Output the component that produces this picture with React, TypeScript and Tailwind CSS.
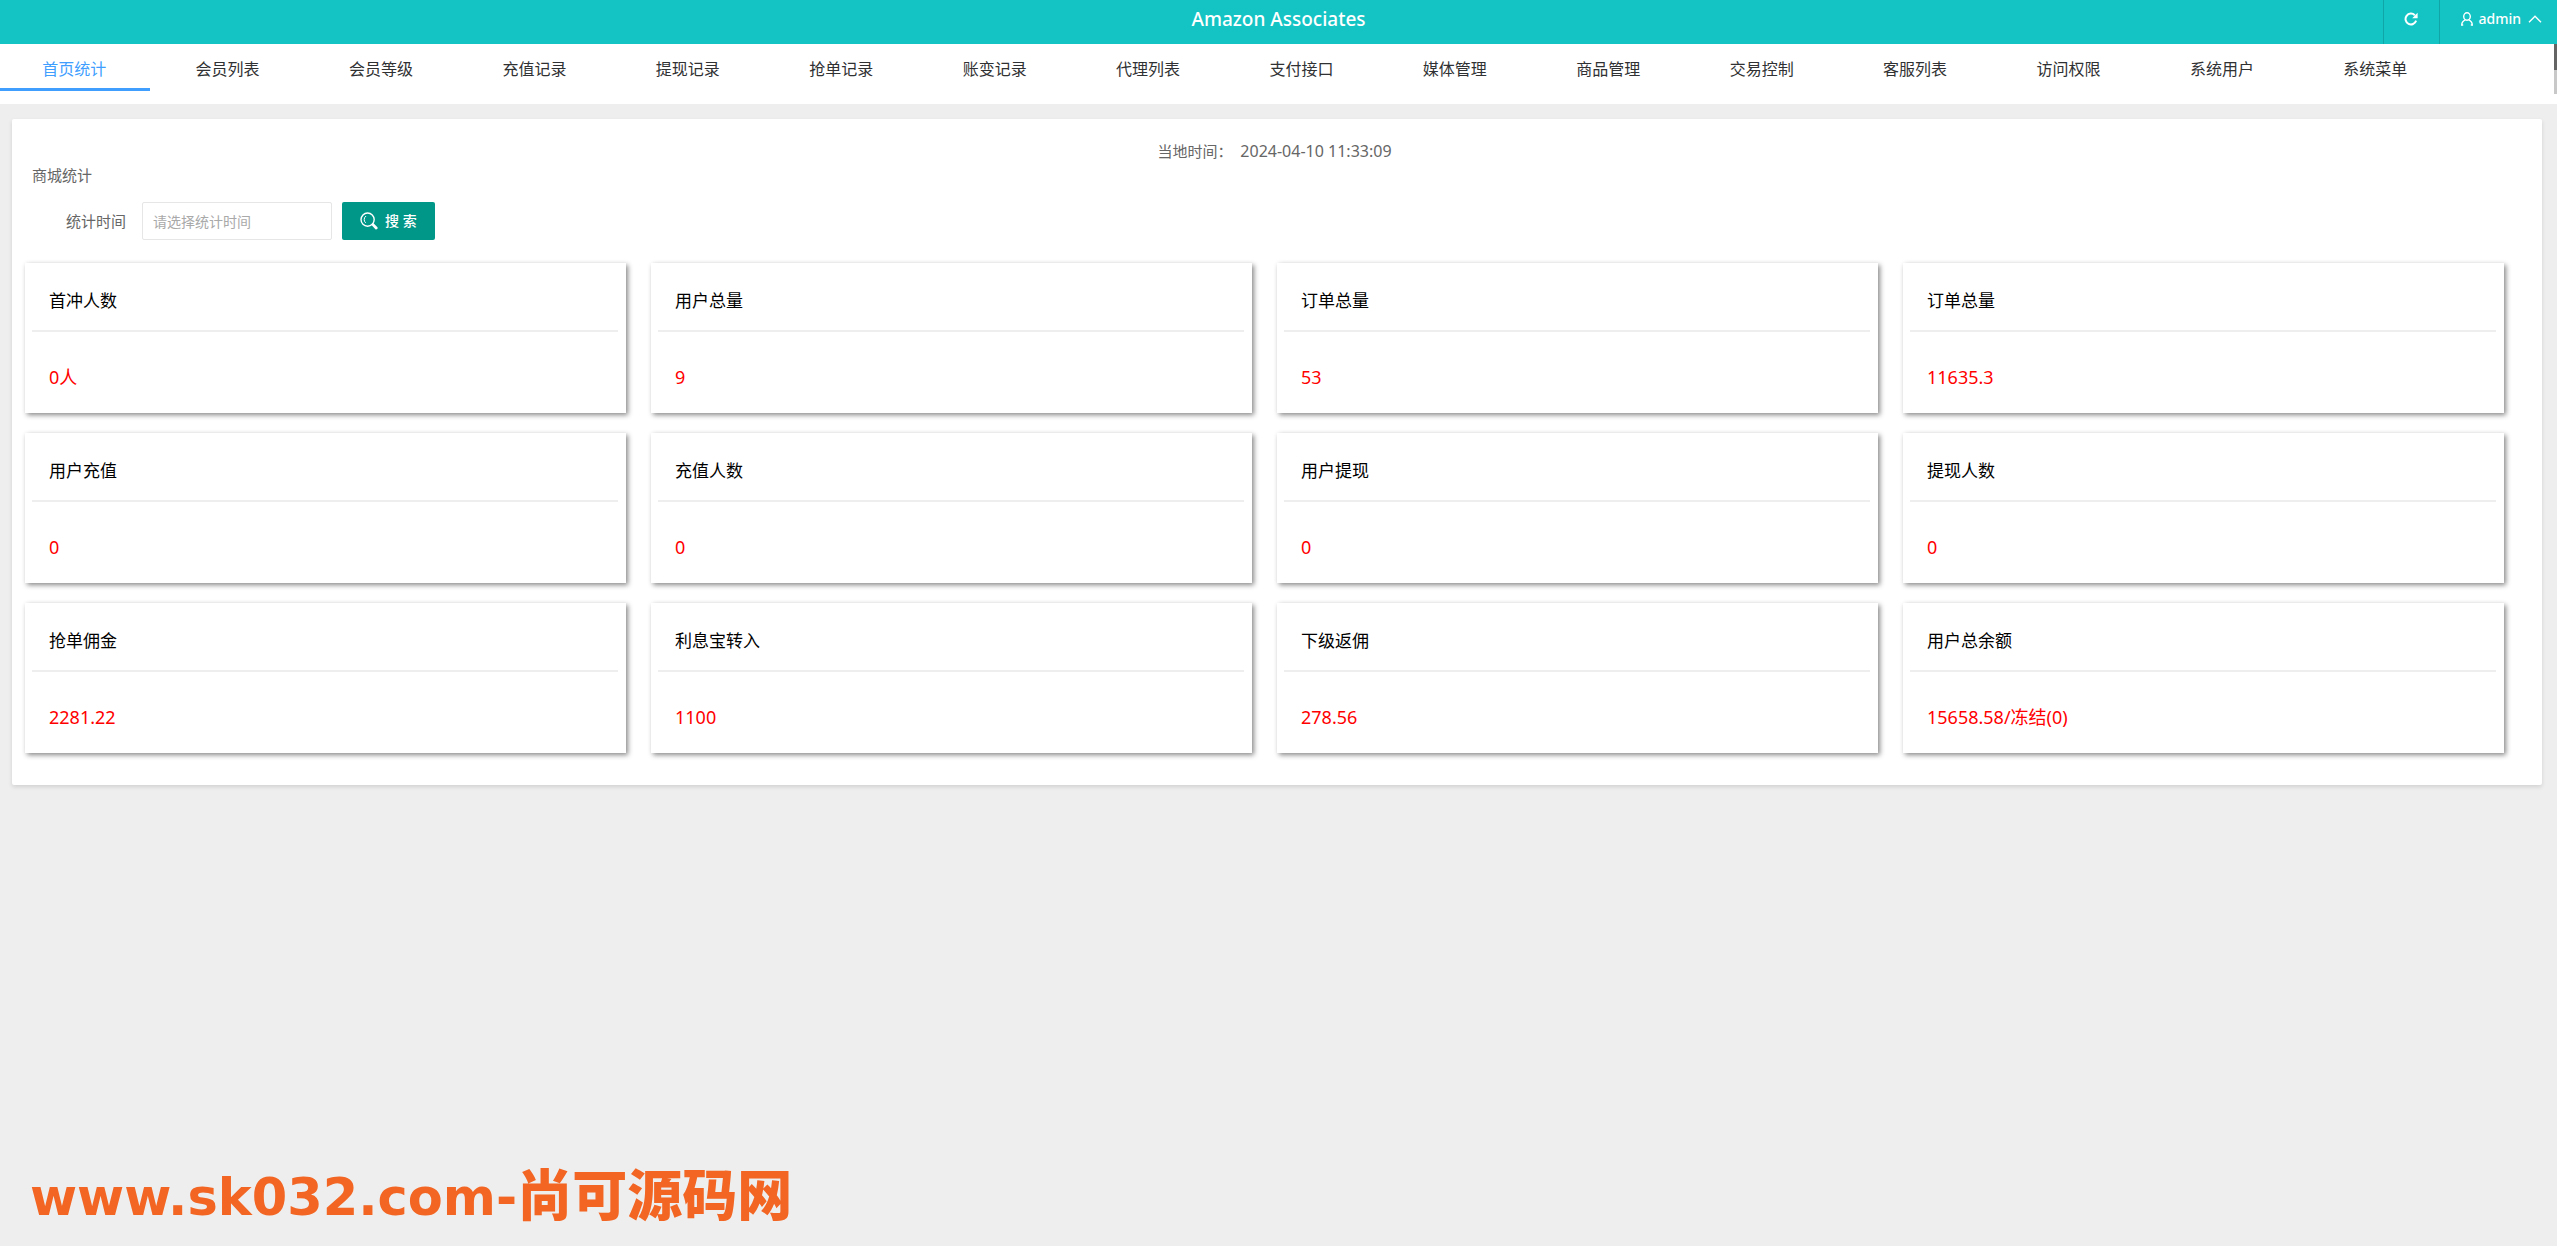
import { useState } from 'react';

const menus = [
  '首页统计', '会员列表', '会员等级', '充值记录', '提现记录', '抢单记录', '账变记录', '代理列表',
  '支付接口', '媒体管理', '商品管理', '交易控制', '客服列表', '访问权限', '系统用户', '系统菜单',
];

interface Stat {
  title: string;
  value: string;
}

const stats: Stat[] = [
  { title: '首冲人数', value: '0人' },
  { title: '用户总量', value: '9' },
  { title: '订单总量', value: '53' },
  { title: '订单总量', value: '11635.3' },
  { title: '用户充值', value: '0' },
  { title: '充值人数', value: '0' },
  { title: '用户提现', value: '0' },
  { title: '提现人数', value: '0' },
  { title: '抢单佣金', value: '2281.22' },
  { title: '利息宝转入', value: '1100' },
  { title: '下级返佣', value: '278.56' },
  { title: '用户总余额', value: '15658.58/冻结(0)' },
];

function RefreshIcon() {
  return (
    <svg viewBox="0 0 14 14" className="w-3.5 h-3.5" fill="none" stroke="currentColor" strokeWidth="2">
      <path d="M10.8 3.2A5.4 5.4 0 1 0 12.1 8.6" />
      <path d="M13.6 0.8V6.2H8.2Z" fill="currentColor" stroke="none" />
    </svg>
  );
}

function UserIcon() {
  return (
    <svg viewBox="0 0 12 14" className="w-3 h-3.5" fill="none" stroke="currentColor" strokeWidth="1.4">
      <ellipse cx="6" cy="4.5" rx="3.3" ry="3.7" />
      <path d="M4.4 7.8C2 8.7 0.8 10.4 0.7 13H2.2M7.6 7.8C10 8.7 11.2 10.4 11.3 13H9.8" />
    </svg>
  );
}

function CaretIcon() {
  return (
    <svg viewBox="0 0 14 8" className="w-3.5 h-2" fill="none" stroke="currentColor" strokeWidth="1.4">
      <path d="M1 7.2L7 1.2L13 7.2" />
    </svg>
  );
}

function SearchIcon() {
  return (
    <svg viewBox="0 0 18 18" className="w-[18px] h-[18px]" fill="none" stroke="currentColor" strokeLinecap="round">
      <circle cx="7.6" cy="7.6" r="6.6" strokeWidth="1.4" />
      <path d="M5.8 4.2A4 4 0 0 0 5.4 10.6" strokeWidth="1" />
      <path d="M13 12.6L16.2 16" strokeWidth="2.8" />
    </svg>
  );
}

function Header() {
  return (
    <header className="flex items-stretch h-11 bg-[#14c4c4] text-white">
      <div className="flex-1" />
      <h1 className="text-[19px] leading-[38px] font-medium">Amazon Associates</h1>
      <div className="flex-1 flex justify-end">
        <button aria-label="刷新" className="w-14 pb-1.5 flex items-center justify-center border-l border-[#12a5a8]">
          <RefreshIcon />
        </button>
        <button className="pl-[21px] pr-[15px] pb-1.5 flex items-center text-sm font-medium border-l border-[#12a5a8]">
          <UserIcon />
          <span className="ml-1.5 mr-[7px]">admin</span>
          <CaretIcon />
        </button>
      </div>
    </header>
  );
}

function NavTabs() {
  const [active, setActive] = useState(0);
  return (
    <nav className="flex h-15 bg-white">
      {menus.map((name, i) => (
        <a
          key={name}
          href="#"
          onClick={() => setActive(i)}
          className="w-[6%] shrink-0 pr-[3px] text-base leading-[50px]"
        >
          <span className={i === active
            ? 'block h-[47px] pr-0.5 text-center text-[#409eff] border-b-3 border-[#409eff]'
            : 'block h-[47px] pr-0.5 text-center text-[#303133]'}
          >
            {name}
          </span>
        </a>
      ))}
      <div className="ml-auto w-[3px] h-[50px] bg-[#c8c8c8]">
        <div className="h-[26px] bg-[#646464]" />
      </div>
    </nav>
  );
}

function StatCard({ title, value }: Stat) {
  return (
    <div className="pl-[7px] pr-2 bg-white shadow-[2px_2px_5px_#888]">
      <h3 className="pt-[26px] pb-[17px] pl-[17px] text-[17px] leading-6 text-black border-b-2 border-[#eee]">{title}</h3>
      <p className="pt-[33px] pb-6 pl-[17px] text-lg leading-6 text-[#f00]">{value}</p>
    </div>
  );
}

export default function App() {
  return (
    <div className="min-h-screen flex flex-col bg-[#eee] text-[#666] font-['Noto_Sans','Noto_Sans_CJK_SC',sans-serif]">
      <Header />
      <NavTabs />

      <main className="mt-[15px] ml-3 mr-[15px] pt-5 pb-8 pl-[13px] pr-[38px] bg-white rounded-xs shadow-[0_2px_4px_rgba(0,0,0,0.12)]">
        <p className="pl-5 text-center text-[15px] leading-6">
          当地时间： <time className="ml-1 text-base leading-6">2024-04-10 11:33:09</time>
        </p>
        <h2 className="pl-[7px] text-[15px] leading-6">商城统计</h2>

        <form className="mt-[15px] mb-[23px] flex items-center" onSubmit={(e) => e.preventDefault()}>
          <label htmlFor="stat-time" className="pl-[41px] pr-4 text-[15px]">统计时间</label>
          <input
            id="stat-time"
            type="text"
            placeholder="请选择统计时间"
            className="w-[190px] h-[38px] px-2.5 text-sm border border-[#e6e6e6] rounded-xs placeholder:text-[#a9a9a9]"
          />
          <button className="ml-2.5 h-[38px] px-[18px] flex items-center gap-[7px] bg-[#009688] text-white text-sm font-medium rounded-xs">
            <SearchIcon />
            搜 索
          </button>
        </form>

        <div className="grid grid-cols-4 gap-x-[25px] gap-y-5">
          {stats.map((s, i) => (
            <StatCard key={i} title={s.title} value={s.value} />
          ))}
        </div>
      </main>

      <footer className="mt-auto pl-[30px] pb-[18px] flex items-baseline text-[#f26522] whitespace-nowrap">
        <span className="text-[51px] leading-[60px] font-bold font-['DejaVu_Sans',sans-serif]">www.sk032.com-</span>
        <span className="text-[55px] leading-[60px] font-black font-['Noto_Sans_CJK_SC',sans-serif]">尚可源码网</span>
      </footer>
    </div>
  );
}
